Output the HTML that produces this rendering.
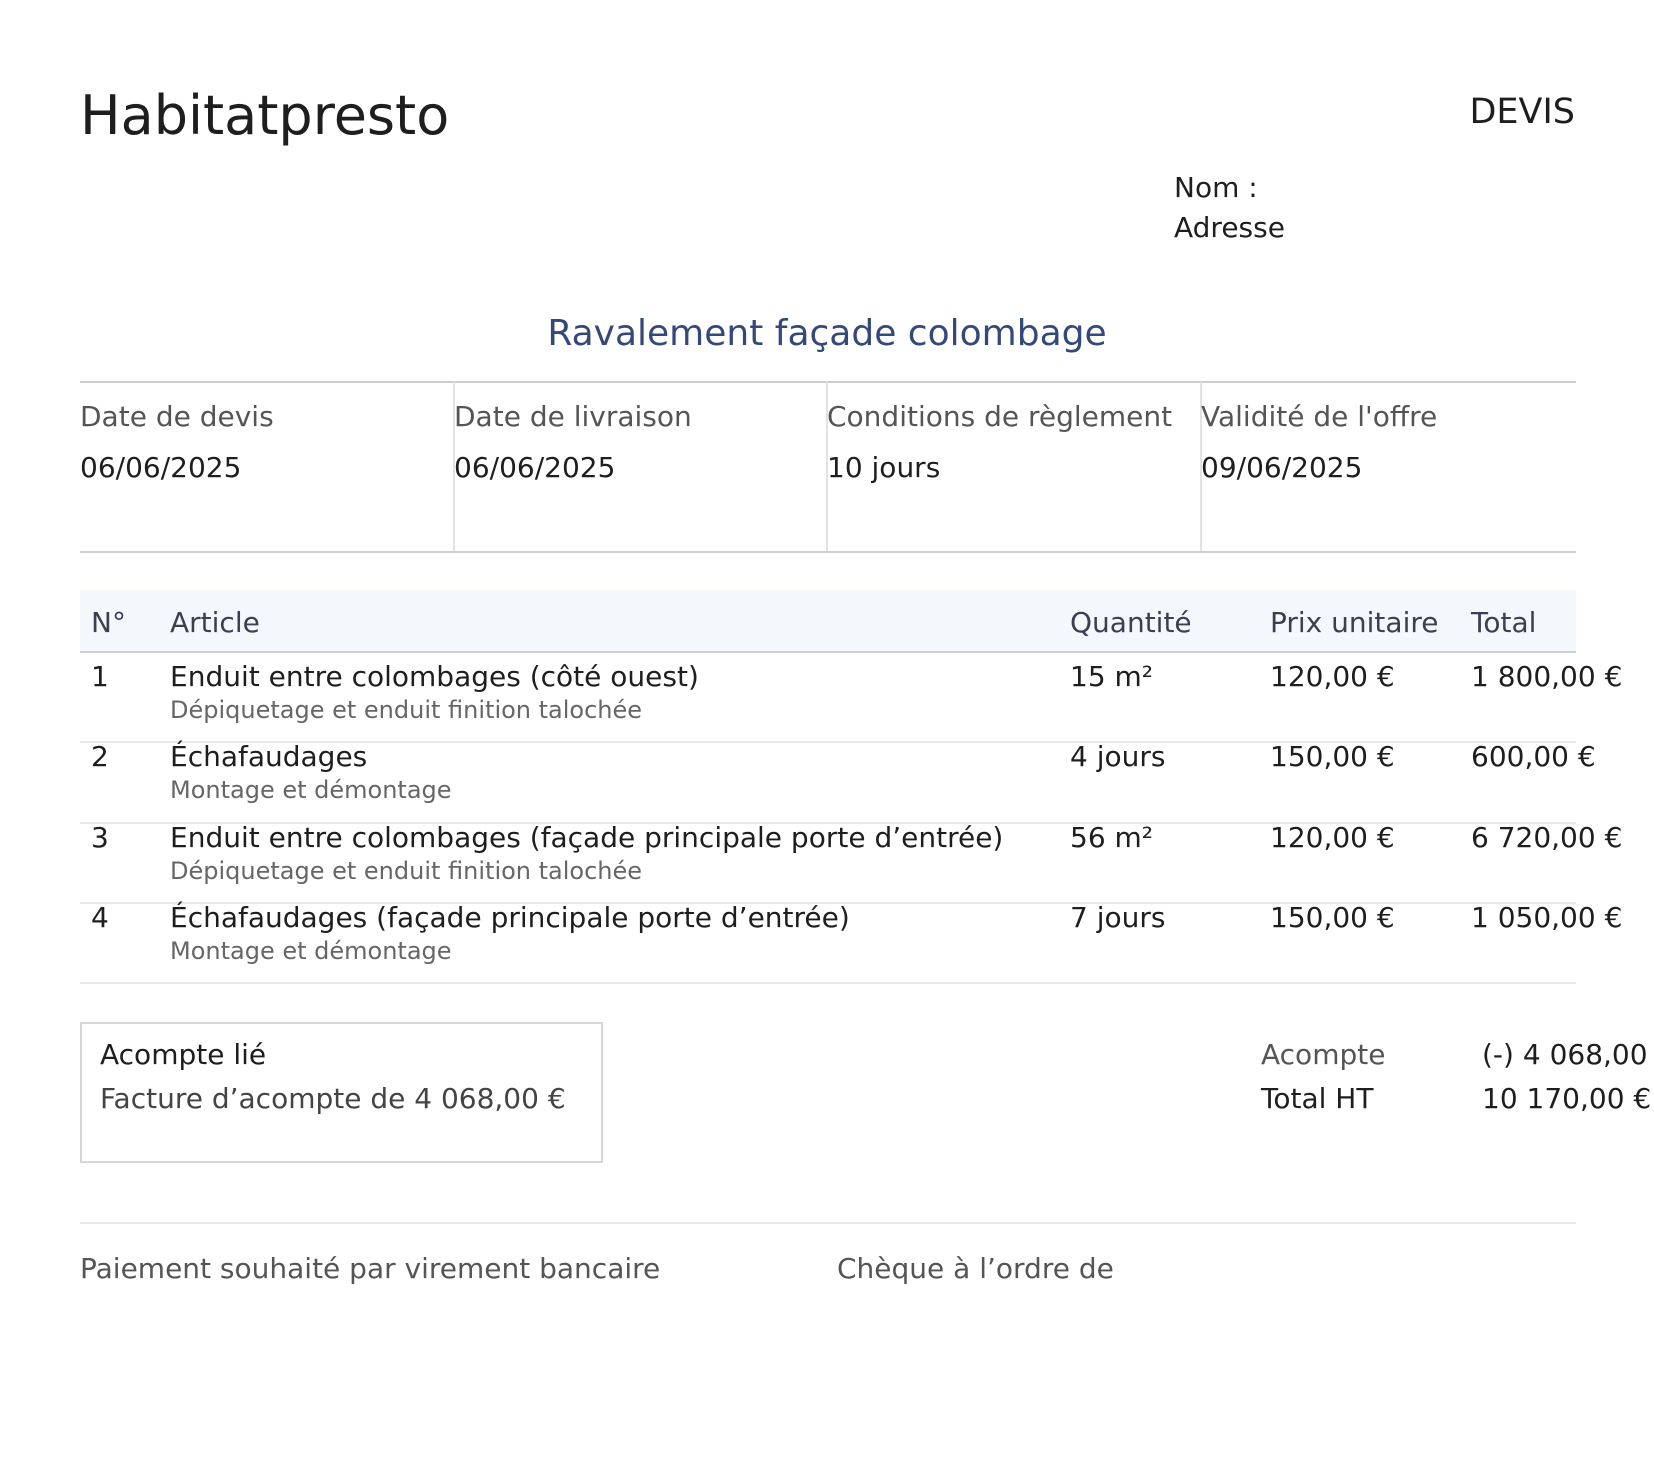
<!DOCTYPE html>
<html><head><meta charset="utf-8">
<style>
html,body{margin:0;padding:0;background:#fff;}
body{width:1654px;height:1475px;position:relative;overflow:hidden;font-family:"DejaVu Sans","Liberation Sans",sans-serif;color:#1e1e1e;}
.a{position:absolute;line-height:1;white-space:nowrap;}
.f28{font-size:28px;}
.f24{font-size:24px;}
.g{color:#555;}
.hl{position:absolute;left:80px;width:1496px;height:0;}
.vl{position:absolute;top:382px;height:170px;width:0;border-left:2px solid #e3e3e3;}
</style></head><body>
<div class="a" style="left:80px;top:89px;font-size:54px;">Habitatpresto</div>
<div class="a" style="right:79px;top:95px;font-size:35px;">DEVIS</div>
<div class="a f28" style="left:1174px;top:174px;">Nom :</div>
<div class="a f28" style="left:1174px;top:214px;">Adresse</div>
<div class="a" style="left:0;width:1654px;text-align:center;top:316px;font-size:36px;color:#34497a;">Ravalement façade colombage</div>

<div class="hl" style="top:381px;border-top:2px solid #cfcfcf;"></div>
<div class="vl" style="left:453px;"></div>
<div class="vl" style="left:826px;"></div>
<div class="vl" style="left:1200px;"></div>
<div class="hl" style="top:551px;border-top:2px solid #cfcfcf;"></div>
<div class="a f28 g" style="left:80px;top:403px;">Date de devis</div>
<div class="a f28" style="left:80px;top:454px;">06/06/2025</div>
<div class="a f28 g" style="left:454px;top:403px;">Date de livraison</div>
<div class="a f28" style="left:454px;top:454px;">06/06/2025</div>
<div class="a f28 g" style="left:827px;top:403px;">Conditions de règlement</div>
<div class="a f28" style="left:827px;top:454px;">10 jours</div>
<div class="a f28 g" style="left:1201px;top:403px;">Validité de l'offre</div>
<div class="a f28" style="left:1201px;top:454px;">09/06/2025</div>

<div style="position:absolute;left:80px;top:590px;width:1496px;height:61px;background:#f4f7fb;border-bottom:2px solid #cfcfcf;"></div>
<div class="a f28" style="left:91px;top:609px;color:#3a3f52;">N°</div>
<div class="a f28" style="left:170px;top:609px;color:#3a3f52;">Article</div>
<div class="a f28" style="left:1070px;top:609px;color:#3a3f52;">Quantité</div>
<div class="a f28" style="left:1270px;top:609px;color:#3a3f52;">Prix unitaire</div>
<div class="a f28" style="left:1471px;top:609px;color:#3a3f52;">Total</div>

<div class="a f28" style="left:91px;top:663px;">1</div>
<div class="a f28" style="left:170px;top:663px;">Enduit entre colombages (côté ouest)</div>
<div class="a f24" style="left:170px;top:698px;color:#666;">Dépiquetage et enduit finition talochée</div>
<div class="a f28" style="left:1070px;top:663px;">15 m²</div>
<div class="a f28" style="left:1270px;top:663px;">120,00 €</div>
<div class="a f28" style="left:1471px;top:663px;">1 800,00 €</div>
<div class="hl" style="top:741px;border-top:2px solid #e8e8e8;"></div>

<div class="a f28" style="left:91px;top:743px;">2</div>
<div class="a f28" style="left:170px;top:743px;">Échafaudages</div>
<div class="a f24" style="left:170px;top:778px;color:#666;">Montage et démontage</div>
<div class="a f28" style="left:1070px;top:743px;">4 jours</div>
<div class="a f28" style="left:1270px;top:743px;">150,00 €</div>
<div class="a f28" style="left:1471px;top:743px;">600,00 €</div>
<div class="hl" style="top:822px;border-top:2px solid #e8e8e8;"></div>

<div class="a f28" style="left:91px;top:824px;">3</div>
<div class="a f28" style="left:170px;top:824px;">Enduit entre colombages (façade principale porte d’entrée)</div>
<div class="a f24" style="left:170px;top:859px;color:#666;">Dépiquetage et enduit finition talochée</div>
<div class="a f28" style="left:1070px;top:824px;">56 m²</div>
<div class="a f28" style="left:1270px;top:824px;">120,00 €</div>
<div class="a f28" style="left:1471px;top:824px;">6 720,00 €</div>
<div class="hl" style="top:902px;border-top:2px solid #e8e8e8;"></div>

<div class="a f28" style="left:91px;top:904px;">4</div>
<div class="a f28" style="left:170px;top:904px;">Échafaudages (façade principale porte d’entrée)</div>
<div class="a f24" style="left:170px;top:939px;color:#666;">Montage et démontage</div>
<div class="a f28" style="left:1070px;top:904px;">7 jours</div>
<div class="a f28" style="left:1270px;top:904px;">150,00 €</div>
<div class="a f28" style="left:1471px;top:904px;">1 050,00 €</div>
<div class="hl" style="top:982px;border-top:2px solid #e8e8e8;"></div>

<div style="position:absolute;left:80px;top:1022px;width:519px;height:137px;border:2px solid #d6d6d6;"></div>
<div class="a f28" style="left:100px;top:1041px;">Acompte lié</div>
<div class="a f28" style="left:100px;top:1085px;color:#444;">Facture d’acompte de 4 068,00 €</div>
<div class="a f28 g" style="left:1261px;top:1041px;">Acompte</div>
<div class="a f28" style="left:1482px;top:1041px;">(-) 4 068,00 €</div>
<div class="a f28" style="left:1261px;top:1085px;">Total HT</div>
<div class="a f28" style="left:1482px;top:1085px;">10 170,00 €</div>

<div class="hl" style="top:1222px;border-top:2px solid #e8e8e8;"></div>
<div class="a f28 g" style="left:80px;top:1255px;">Paiement souhaité par virement bancaire</div>
<div class="a f28 g" style="left:837px;top:1255px;">Chèque à l’ordre de</div>
</body></html>
